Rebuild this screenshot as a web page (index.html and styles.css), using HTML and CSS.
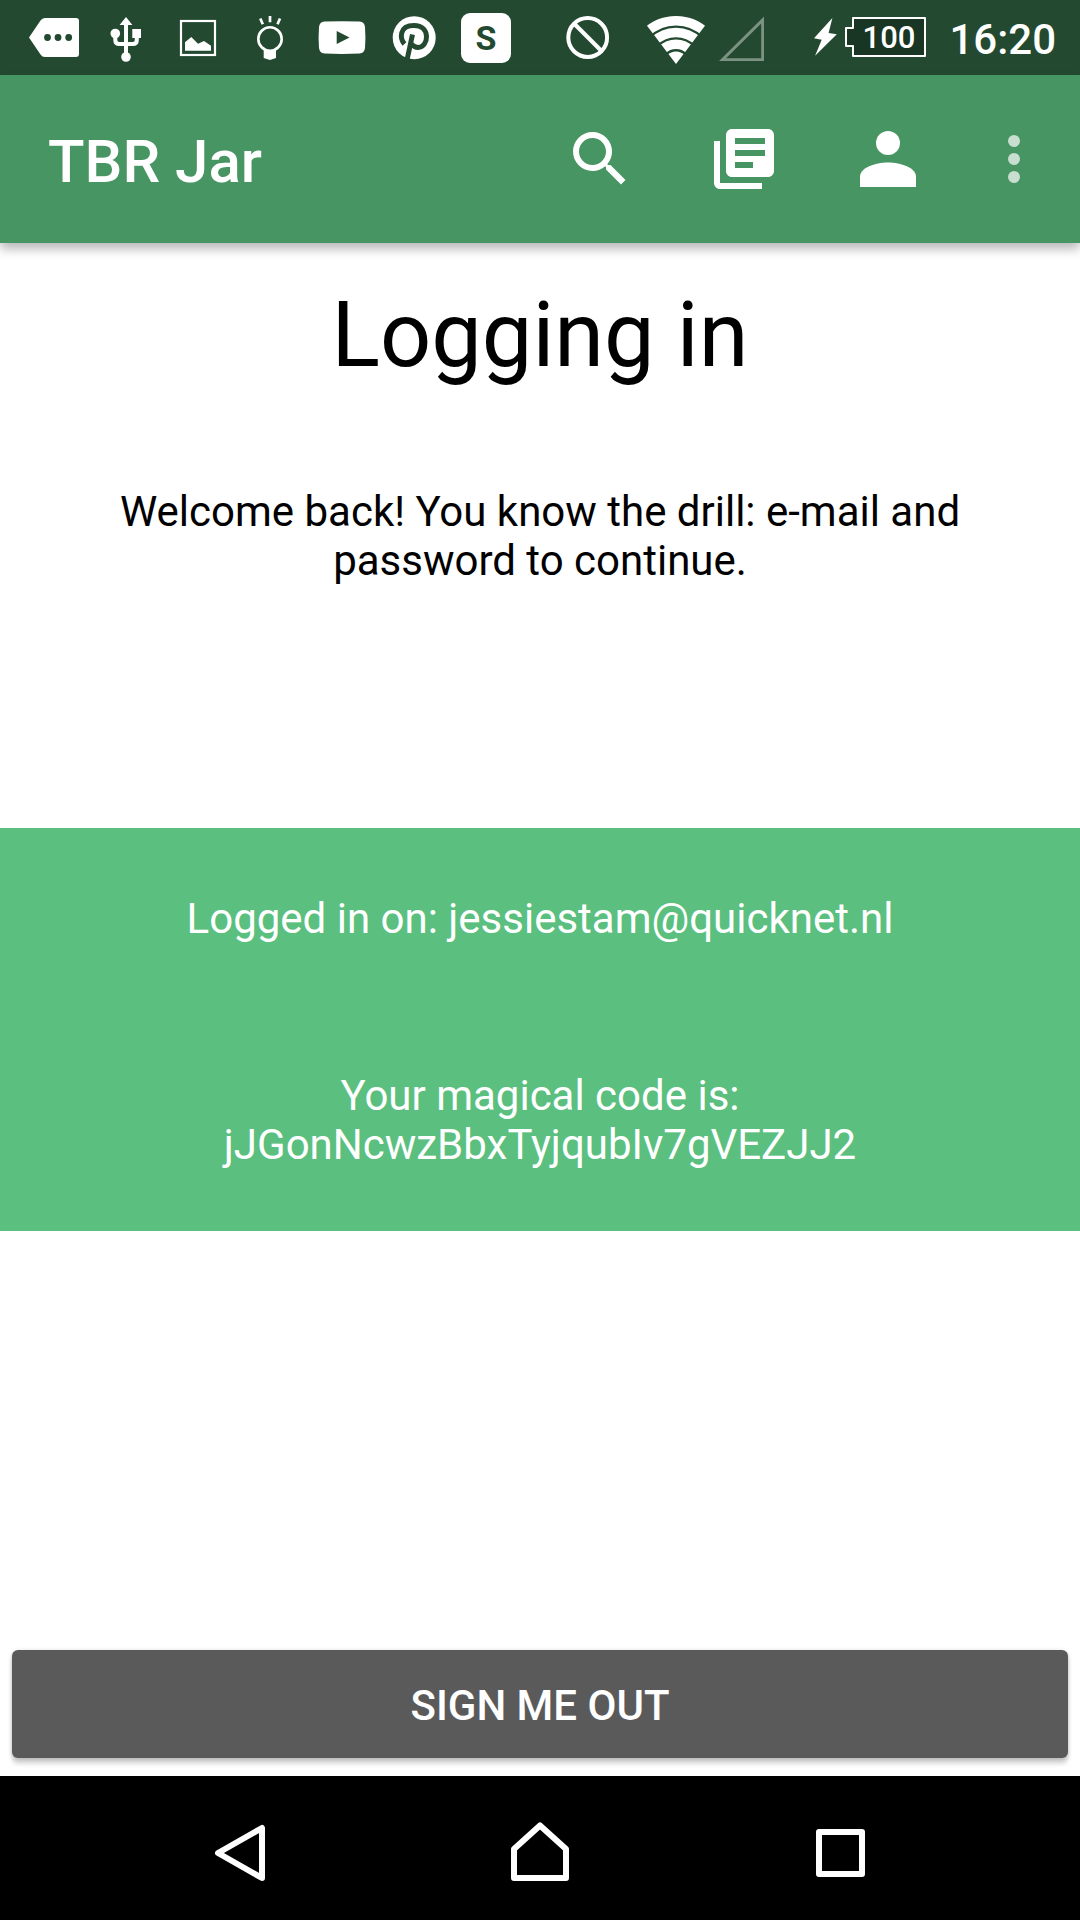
FILE: index.html
```html
<!DOCTYPE html>
<html lang="en">
<head>
<meta charset="utf-8">
<meta name="viewport" content="width=device-width, initial-scale=1">
<title>TBR Jar</title>
<link rel="stylesheet" href="styles.css">
</head>
<body>
<div class="status-bar">
  <div class="notifications">
    <svg class="status-icon" viewBox="0 0 72 75" aria-hidden="true">
      <path fill="#fff" d="M11 37.5 22.5 20.500q1.600-2.500 4.500-2.500H58q3 0 3 3v33q0 3-3 3H27q-2.900 0-4.500-2.500z"/>
      <g class="cutout"><circle cx="29.500" cy="37.500" r="3.400"/><circle cx="40" cy="37.500" r="3.400"/><circle cx="50.700" cy="37.500" r="3.400"/></g>
    </svg>
    <svg class="status-icon" viewBox="0 0 72 75" aria-hidden="true">
      <path fill="#fff" d="M36 17l6.400 8H29.600zM42.300 29H51v9h-8.700z"/>
      <circle fill="#fff" cx="36" cy="57" r="4.800"/><circle fill="#fff" cx="25.300" cy="33.500" r="4.800"/>
      <path fill="none" stroke="#fff" stroke-width="4" d="M36 24v32M25.300 34v6q0 4 4 4h13.500q4 0 4-4v-4"/>
    </svg>
    <svg class="status-icon" viewBox="0 0 72 75" aria-hidden="true">
      <rect x="19" y="21" width="34" height="34" fill="none" stroke="#fff" stroke-width="2.200"/>
      <path fill="#fff" d="M23 50.700v-8.400l6.300-5.300 6.700 6.700 6-2.700 7 4.700v5z"/>
    </svg>
    <svg class="status-icon" viewBox="0 0 72 75" aria-hidden="true">
      <circle cx="36" cy="39" r="11.700" fill="none" stroke="#fff" stroke-width="2.600"/>
      <path fill="#fff" d="M29.700 49l6.300 2 6-2v9l-6 2-6.300-2z"/>
      <path stroke="#fff" stroke-width="2.700" d="M26.300 18.500l2.500 5.700M36 16v6.300M46 18.500l-2.500 5.700"/>
    </svg>
    <svg class="status-icon" viewBox="0 0 72 75" aria-hidden="true">
      <path fill="#fff" d="M18.500 21.600q17.500-.8 35 0 5 .4 5.500 5.400.8 10.500 0 21-.5 5-5.500 5.500-17.500.8-35 0-5-.5-5.500-5.500-.8-10.500 0-21 .5-5 5.500-5.400z"/>
      <path class="cutout" d="M30.700 31l12.800 6.500L30.700 44z"/>
    </svg>
    <svg class="status-icon" viewBox="0 0 72 75" aria-hidden="true">
      <circle cx="36.200" cy="37.700" r="21.500" fill="#fff"/>
      <path class="cutline" d="M26.500 44C22 39 20.500 25.500 36 25.500C53 25.500 51 47 40 47.500C36.500 47.500 35 46 33 43.500M34.500 34.500L28.800 61"/>
    </svg>
    <span class="app-badge-slot"><span class="app-badge">S</span></span>
  </div>
  <div class="system">
    <svg class="status-icon" viewBox="0 0 72 75" aria-hidden="true">
      <g fill="none" stroke="#fff" stroke-width="4"><circle cx="36.700" cy="37.500" r="19.400"/><path d="M23.500 24l27 27"/></g>
    </svg>
    <svg class="status-icon wifi" viewBox="0 0 72 75" aria-hidden="true">
      <clipPath id="wedge"><path d="M36 64-9 4.600h90z"/></clipPath>
      <g clip-path="url(#wedge)" fill="none" stroke="#fff"><circle cx="36" cy="64" r="43.300" stroke-width="9.400"/><circle cx="36" cy="64" r="31.500" stroke-width="9.400"/><circle cx="36" cy="64" r="19.700" stroke-width="9.400"/><circle cx="36" cy="64" r="6.200" stroke-width="12.400"/></g>
    </svg>
    <svg class="signal" viewBox="0 0 46 75" aria-hidden="true">
      <path fill="#7c9283" fill-rule="evenodd" d="M0 61 45 16.500V61zM7 58.200h35.200V23.500z"/>
    </svg>
    <svg class="power" viewBox="0 0 116 75" role="img" aria-label="Battery charging">
      <path fill="#fff" d="M20.400 18 2 38.300l7.700 1.400L3.100 55.700l21.700-21.400-8.200-1.300z"/>
      <path fill="#193524" stroke="#fff" stroke-width="2" stroke-linejoin="round" d="M41 18h72v38H41V46h-7V28h7z"/>
      <text class="battery-level" x="77" y="48">100</text>
    </svg>
    <time class="clock">16:20</time>
  </div>
</div>

<header class="app-bar">
  <h1 class="app-title">TBR Jar</h1>
  <div class="actions">
    <button class="action" type="button" aria-label="Search">
      <svg class="action-icon" viewBox="0 0 24 24"><path d="M15.500 14h-.79l-.28-.27A6.471 6.471 0 0 0 16 9.500 6.500 6.500 0 1 0 9.500 16c1.610 0 3.090-.59 4.230-1.570l.27.28v.79l5 4.990L20.490 19l-4.990-5zm-6 0C7.010 14 5 11.990 5 9.500S7.010 5 9.500 5 14 7.010 14 9.500 11.990 14 9.500 14z"/></svg>
    </button>
    <button class="action" type="button" aria-label="Library">
      <svg class="action-icon" viewBox="0 0 24 24"><path d="M4 6H2v14c0 1.100.9 2 2 2h14v-2H4V6zm16-4H8c-1.100 0-2 .9-2 2v12c0 1.100.9 2 2 2h12c1.100 0 2-.9 2-2V4c0-1.100-.9-2-2-2zm-1 9H9V9h10v2zm-4 4H9v-2h6v2zm4-8H9V5h10v2z"/></svg>
    </button>
    <button class="action" type="button" aria-label="Profile">
      <svg class="action-icon" viewBox="0 0 72 72"><circle cx="36" cy="20" r="12"/><path d="M8 64V53.500C8 45 23 39.500 36 39.500S64 45 64 53.500V64z"/></svg>
    </button>
    <button class="action action-more" type="button" aria-label="More options">
      <svg class="action-icon" viewBox="0 0 72 72"><circle cx="36" cy="18" r="6"/><circle cx="36" cy="36" r="6"/><circle cx="36" cy="54" r="6"/></svg>
    </button>
  </div>
</header>

<main class="content">
  <h2 class="heading">Logging in</h2>
  <p class="intro">Welcome back! You know the drill: e-mail and password to continue.</p>
  <section class="account">
    <p>Logged in on: jessiestam@quicknet.nl</p>
    <p>Your magical code is: jJGonNcwzBbxTyjqubIv7gVEZJJ2</p>
  </section>
  <button class="sign-out" type="button">SIGN ME OUT</button>
</main>

<nav class="nav-bar" aria-label="System">
  <button class="nav-button" type="button" aria-label="Back">
    <svg class="nav-icon" viewBox="0 0 144 144"><path d="M50 77 94 52v50z"/></svg>
  </button>
  <button class="nav-button" type="button" aria-label="Home">
    <svg class="nav-icon" viewBox="0 0 144 144"><path d="M46 102V73l26-23.500L98 73v29z"/></svg>
  </button>
  <button class="nav-button" type="button" aria-label="Recent apps">
    <svg class="nav-icon" viewBox="0 0 144 144"><path d="M51 56h43v42H51z"/></svg>
  </button>
</nav>
</body>
</html>
```
FILE: styles.css
```css
* {
  box-sizing: border-box;
}

body {
  margin: 0;
  min-height: 100vh;
  display: flex;
  flex-direction: column;
  background: #fff;
  color: #000;
  font-family: Roboto, "Liberation Sans", sans-serif;
  font-size: 42px;
  line-height: 49px;
}

h1, h2, p {
  margin: 0;
  font-weight: 400;
}

button {
  border: 0;
  padding: 0;
  background: none;
  color: inherit;
  font: inherit;
}

svg {
  display: block;
  flex: none;
}

/* Status bar */
.status-bar {
  display: flex;
  justify-content: space-between;
  height: 75px;
  padding: 0 24px 0 18px;
  background: #234a30;
  color: #fff;
}

.notifications,
.system {
  display: flex;
  align-items: center;
}

.status-icon {
  width: 72px;
  height: 75px;
}

.cutout {
  fill: #234a30;
}

.cutline {
  fill: none;
  stroke: #234a30;
  stroke-width: 5;
}

.app-badge-slot {
  display: flex;
  justify-content: center;
  width: 72px;
}

.app-badge {
  width: 50px;
  height: 50px;
  border-radius: 9px;
  background: #fff;
  color: #234a30;
  font-size: 34px;
  font-weight: 700;
  line-height: 51px;
  text-align: center;
}

.wifi {
  margin-left: 17px;
}

.signal {
  width: 46px;
  height: 75px;
  margin: 0 47px 0 7px;
}

.power {
  width: 116px;
  height: 75px;
  margin-right: 21px;
}

.battery-level {
  fill: #fff;
  font-size: 31px;
  font-weight: 500;
  text-anchor: middle;
}

.clock {
  padding-top: 3px;
  font-weight: 500;
}

/* App bar */
.app-bar {
  display: flex;
  align-items: center;
  justify-content: space-between;
  height: 168px;
  padding: 0 12px 0 48px;
  background: #479562;
  color: #fff;
  box-shadow: 0 6px 10px rgba(0, 0, 0, 0.28);
}

.app-title {
  padding-top: 5px;
  font-size: 60px;
  font-weight: 500;
  line-height: 70px;
}

.actions {
  display: flex;
}

.action {
  display: flex;
  align-items: center;
  justify-content: center;
  width: 144px;
  height: 144px;
}

.action-icon {
  width: 72px;
  height: 72px;
  fill: #fff;
}

.action-more {
  width: 108px;
}

.action-more .action-icon {
  fill: #c8dfd0;
}

/* Page content */
.content {
  flex: 1;
  display: flex;
  flex-direction: column;
  padding: 40px 0 18px;
  text-align: center;
}

.heading {
  font-size: 90px;
  line-height: 105px;
}

.intro {
  margin: 99px 48px 0;
}

.account {
  display: flex;
  flex-direction: column;
  gap: 128px;
  margin-top: 243px;
  padding: 66px 48px 62px;
  background: #5bbf7f;
  color: #fff;
}

.sign-out {
  height: 108px;
  margin: auto 12px 0;
  padding-top: 2px;
  border-radius: 6px;
  background: #5a5a5b;
  color: #fff;
  font-weight: 500;
  box-shadow: 0 6px 4px rgba(0, 0, 0, 0.15), 0 1px 4px rgba(0, 0, 0, 0.2);
}

/* Navigation bar */
.nav-bar {
  display: flex;
  height: 144px;
  padding: 0 90px;
  background: #000;
}

.nav-button {
  flex: 1;
  display: flex;
  justify-content: center;
}

.nav-icon {
  width: 144px;
  height: 144px;
  fill: none;
  stroke: #fff;
  stroke-width: 6;
  stroke-linejoin: round;
}
```
